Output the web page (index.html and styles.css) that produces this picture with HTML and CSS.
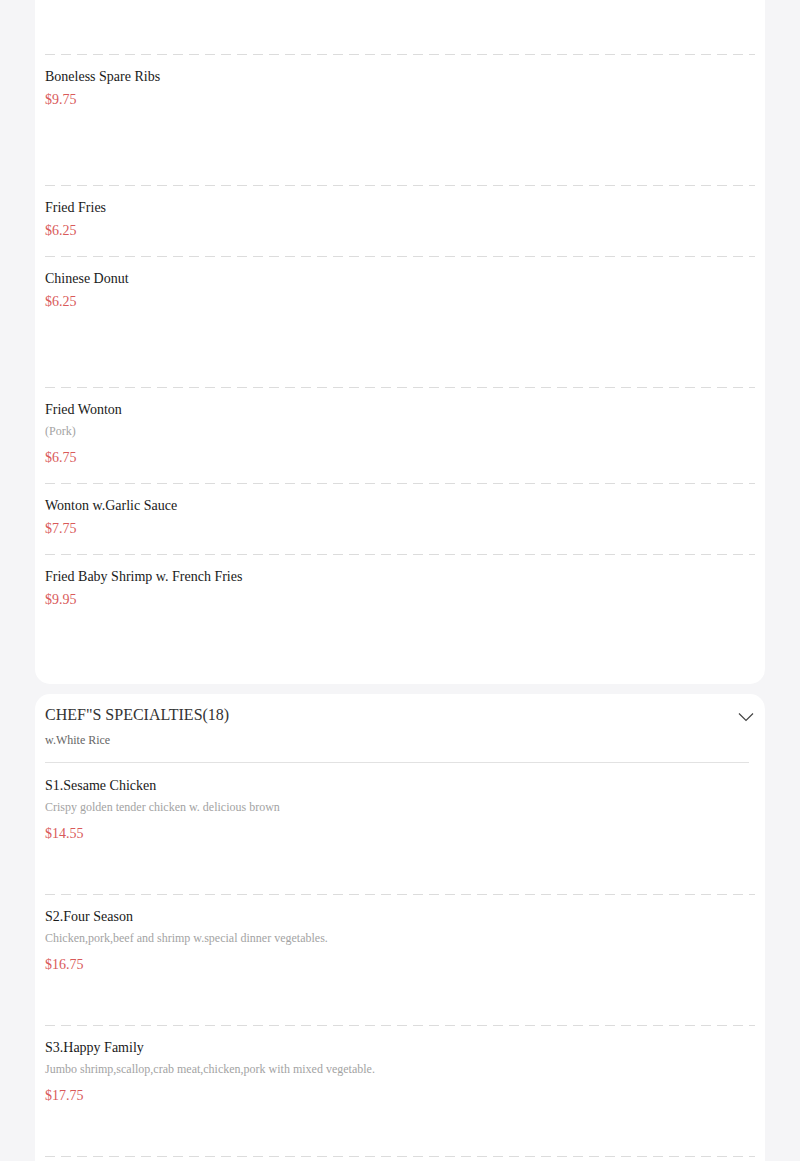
FILE: index.html
```html
<!DOCTYPE html>
<html>
<head>
<meta charset="utf-8">
<link rel="stylesheet" href="styles.css">
</head>
<body>
<div class="page">
  <section class="card card-cut">
    <div class="tail"></div>
    <div class="item tall">
      <div class="name">Boneless Spare Ribs</div>
      <div class="price">$9.75</div>
    </div>
    <div class="item">
      <div class="name">Fried Fries</div>
      <div class="price">$6.25</div>
    </div>
    <div class="item tall">
      <div class="name">Chinese Donut</div>
      <div class="price">$6.25</div>
    </div>
    <div class="item">
      <div class="name">Fried Wonton</div>
      <div class="desc">(Pork)</div>
      <div class="price">$6.75</div>
    </div>
    <div class="item">
      <div class="name">Wonton w.Garlic Sauce</div>
      <div class="price">$7.75</div>
    </div>
    <div class="item tall last">
      <div class="name">Fried Baby Shrimp w. French Fries</div>
      <div class="price">$9.95</div>
    </div>
  </section>

  <section class="card">
    <header class="cat-head">
      <div class="cat-text">
        <div class="cat-title">CHEF"S SPECIALTIES(18)</div>
        <div class="cat-sub">w.White Rice</div>
      </div>
      <svg class="chev" width="16" height="10" viewBox="0 0 16 10"><path d="M1 1.5 L8 8.5 L15 1.5" fill="none" stroke="#444" stroke-width="1.2"/></svg>
    </header>
    <div class="item tall">
      <div class="name">S1.Sesame Chicken</div>
      <div class="desc">Crispy golden tender chicken w. delicious brown</div>
      <div class="price">$14.55</div>
    </div>
    <div class="item tall">
      <div class="name">S2.Four Season</div>
      <div class="desc">Chicken,pork,beef and shrimp w.special dinner vegetables.</div>
      <div class="price">$16.75</div>
    </div>
    <div class="item tall">
      <div class="name">S3.Happy Family</div>
      <div class="desc">Jumbo shrimp,scallop,crab meat,chicken,pork with mixed vegetable.</div>
      <div class="price">$17.75</div>
    </div>
    <div class="spacer"></div>
  </section>
</div>
</body>
</html>
```

FILE: styles.css
```css
html, body {
  margin: 0;
  padding: 0;
  background: #f5f5f7;
  font-family: "Liberation Serif", "Times New Roman", serif;
  color: #222;
}
.page {
  padding: 0 35px;
  display: flex;
  flex-direction: column;
  gap: 10px;
}
.card {
  background: #fff;
  border-radius: 15px;
  padding: 0 10px;
}
.card-cut {
  border-top-left-radius: 0;
  border-top-right-radius: 0;
}
.tail,
.item {
  box-sizing: border-box;
  background-image: repeating-linear-gradient(to right, #dcdcdc 0 10px, transparent 10px 16px);
  background-size: 100% 1px;
  background-repeat: no-repeat;
  background-position: left bottom;
}
.tail {
  height: 55px;
}
.item {
  padding: 12px 0 16px;
  display: flex;
  flex-direction: column;
}
.item.tall {
  min-height: 131px;
}
.item.last {
  background-image: none;
  min-height: 129px;
}
.cat-head + .item {
  padding-top: 13px;
  min-height: 132px;
}
.spacer {
  height: 40px;
}
.name {
  font-size: 14px;
  line-height: 20px;
  color: #1a1a1a;
}
.desc {
  font-size: 12px;
  line-height: 18px;
  margin-top: 2px;
  color: #a3a3a3;
}
.price {
  font-size: 14px;
  line-height: 20px;
  margin-top: 3px;
  color: #d95a5a;
}
.desc + .price {
  margin-top: 8px;
}
.cat-head {
  display: flex;
  justify-content: space-between;
  align-items: flex-start;
  padding: 11px 0 14px;
  margin-right: 6px;
  border-bottom: 1px solid #e2e2e2;
}
.cat-title {
  font-size: 16px;
  line-height: 20px;
  color: #333;
}
.cat-sub {
  font-size: 12px;
  line-height: 16px;
  margin-top: 7px;
  color: #666;
}
.chev {
  margin-top: 7px;
  margin-right: -5px;
}
```
